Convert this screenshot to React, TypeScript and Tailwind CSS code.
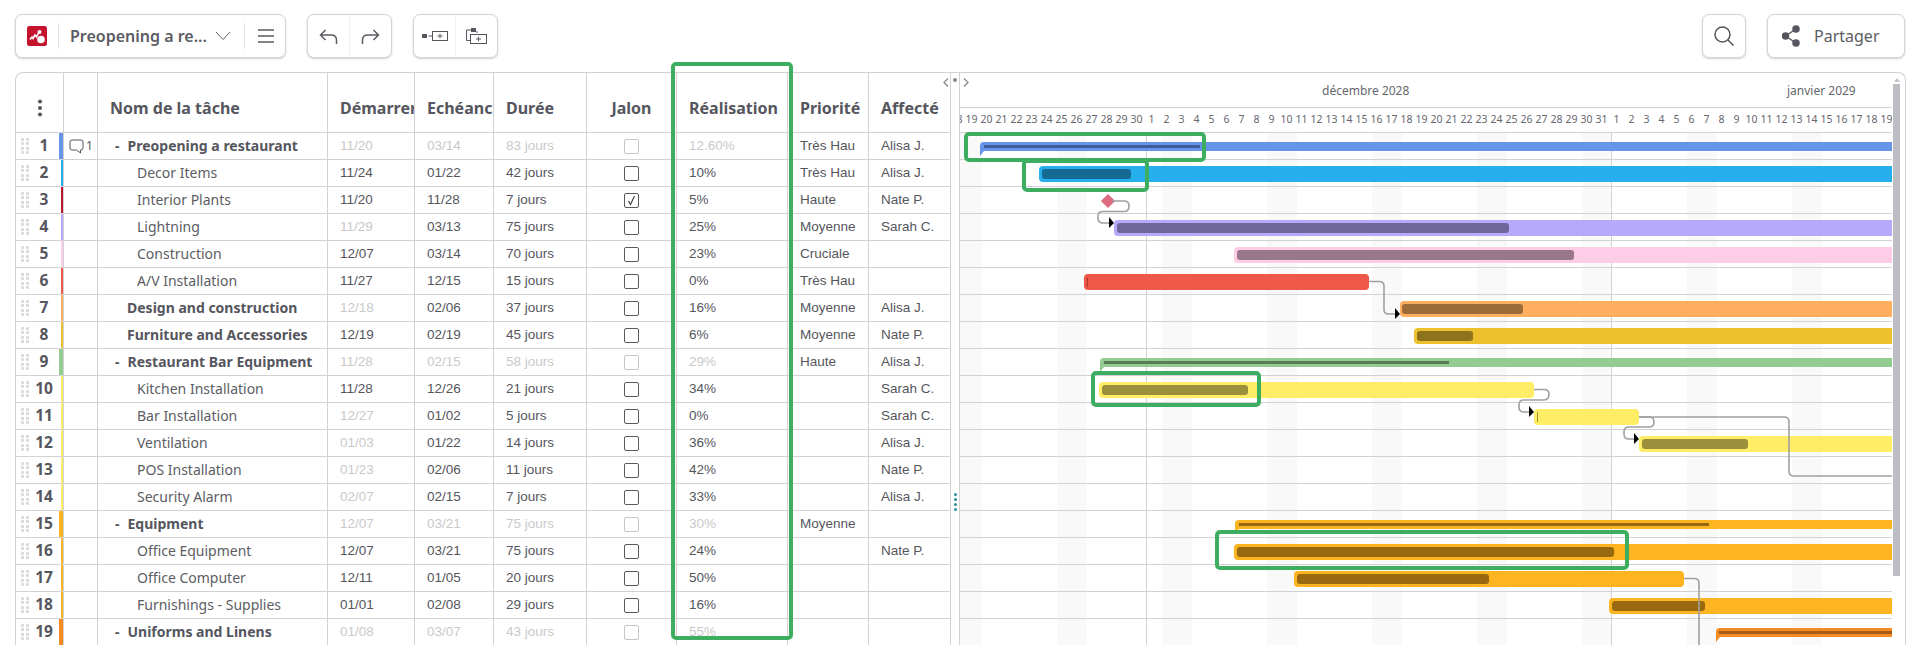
import React from "react";

const NOTO = "font-['Noto_Sans',sans-serif]";
const ARIAL = "font-['Liberation_Sans',Arial,sans-serif]";

type Row = {
  n: number; name: string; start: string; end: string; dur: string; real: string;
  prio?: string; who?: string; color: string; parent?: boolean; bold?: boolean; gs?: boolean; checked?: boolean;
};

const rows: Row[] = [
  { n: 1, name: "Preopening a restaurant", start: "11/20", end: "03/14", dur: "83 jours", real: "12.60%", prio: "Très Hau", who: "Alisa J.", color: "#6694e8", parent: true, bold: true },
  { n: 2, name: "Decor Items", start: "11/24", end: "01/22", dur: "42 jours", real: "10%", prio: "Très Hau", who: "Alisa J.", color: "#27aeec" },
  { n: 3, name: "Interior Plants", start: "11/20", end: "11/28", dur: "7 jours", real: "5%", prio: "Haute", who: "Nate P.", color: "#b8182f", checked: true },
  { n: 4, name: "Lightning", start: "11/29", end: "03/13", dur: "75 jours", real: "25%", prio: "Moyenne", who: "Sarah C.", color: "#b6a9fb", gs: true },
  { n: 5, name: "Construction", start: "12/07", end: "03/14", dur: "70 jours", real: "23%", prio: "Cruciale", color: "#fdcce6" },
  { n: 6, name: "A/V Installation", start: "11/27", end: "12/15", dur: "15 jours", real: "0%", prio: "Très Hau", color: "#ef5748" },
  { n: 7, name: "Design and construction", start: "12/18", end: "02/06", dur: "37 jours", real: "16%", prio: "Moyenne", who: "Alisa J.", color: "#ffaf5f", bold: true, gs: true },
  { n: 8, name: "Furniture and Accessories", start: "12/19", end: "02/19", dur: "45 jours", real: "6%", prio: "Moyenne", who: "Nate P.", color: "#ecc02f", bold: true },
  { n: 9, name: "Restaurant Bar Equipment", start: "11/28", end: "02/15", dur: "58 jours", real: "29%", prio: "Haute", who: "Alisa J.", color: "#93cc91", parent: true, bold: true },
  { n: 10, name: "Kitchen Installation", start: "11/28", end: "12/26", dur: "21 jours", real: "34%", who: "Sarah C.", color: "#ffed65" },
  { n: 11, name: "Bar Installation", start: "12/27", end: "01/02", dur: "5 jours", real: "0%", who: "Sarah C.", color: "#ffed65", gs: true },
  { n: 12, name: "Ventilation", start: "01/03", end: "01/22", dur: "14 jours", real: "36%", who: "Alisa J.", color: "#ffed65", gs: true },
  { n: 13, name: "POS Installation", start: "01/23", end: "02/06", dur: "11 jours", real: "42%", who: "Nate P.", color: "#ffed65", gs: true },
  { n: 14, name: "Security Alarm", start: "02/07", end: "02/15", dur: "7 jours", real: "33%", who: "Alisa J.", color: "#ffed65", gs: true },
  { n: 15, name: "Equipment", start: "12/07", end: "03/21", dur: "75 jours", real: "30%", prio: "Moyenne", color: "#fdb421", parent: true, bold: true },
  { n: 16, name: "Office Equipment", start: "12/07", end: "03/21", dur: "75 jours", real: "24%", who: "Nate P.", color: "#fdb421" },
  { n: 17, name: "Office Computer", start: "12/11", end: "01/05", dur: "20 jours", real: "50%", color: "#fdb421" },
  { n: 18, name: "Furnishings - Supplies", start: "01/01", end: "02/08", dur: "29 jours", real: "16%", color: "#fdb421" },
  { n: 19, name: "Uniforms and Linens", start: "01/08", end: "03/07", dur: "43 jours", real: "55%", color: "#f58b22", parent: true, bold: true },
];

type Bar = { row: number; x: number; w: number; color: string; dark: string; px: number; pw: number; parent?: boolean; open?: boolean };
const END = 1892;
const bars: Bar[] = [
  { row: 0, x: 980, w: END - 980, color: "#6694e8", dark: "#3e5c9a", px: 984, pw: 216, parent: true, open: true },
  { row: 1, x: 1039, w: END - 1039, color: "#27aeec", dark: "#156a94", px: 1042, pw: 89, open: true },
  { row: 3, x: 1114, w: END - 1114, color: "#b6a9fb", dark: "#6e6698", px: 1117, pw: 392, open: true },
  { row: 4, x: 1234, w: END - 1234, color: "#fdcce6", dark: "#997889", px: 1237, pw: 337, open: true },
  { row: 5, x: 1084, w: 285, color: "#ef5748", dark: "#a63c32", px: 1087, pw: 1 },
  { row: 6, x: 1400, w: END - 1400, color: "#ffaf5f", dark: "#9d6a3a", px: 1402, pw: 121, open: true },
  { row: 7, x: 1414, w: END - 1414, color: "#ecc02f", dark: "#8f731c", px: 1417, pw: 56, open: true },
  { row: 8, x: 1100, w: END - 1100, color: "#93cc91", dark: "#5a7b58", px: 1104, pw: 345, parent: true, open: true },
  { row: 9, x: 1099, w: 435, color: "#ffed65", dark: "#9b8f3c", px: 1102, pw: 146 },
  { row: 10, x: 1534, w: 105, color: "#ffed65", dark: "#9b8f3c", px: 1537, pw: 1 },
  { row: 11, x: 1639, w: END - 1639, color: "#ffed65", dark: "#9b8f3c", px: 1642, pw: 106, open: true },
  { row: 14, x: 1235, w: END - 1235, color: "#fdb421", dark: "#99690f", px: 1239, pw: 470, parent: true, open: true },
  { row: 15, x: 1234, w: END - 1234, color: "#fdb421", dark: "#99690f", px: 1237, pw: 377, open: true },
  { row: 16, x: 1294, w: 390, color: "#fdb421", dark: "#99690f", px: 1297, pw: 192 },
  { row: 17, x: 1609, w: END - 1609, color: "#fdb421", dark: "#99690f", px: 1612, pw: 93, open: true },
  { row: 18, x: 1716, w: END - 1716, color: "#f58b22", dark: "#a85b14", px: 1719, pw: 173, parent: true, open: true },
];

const days: string[] = [];
for (let d = 18; d <= 30; d++) days.push(String(d));
for (let d = 1; d <= 31; d++) days.push(String(d));
for (let d = 1; d <= 19; d++) days.push(String(d));

const stripes = [952, 1057, 1162, 1267, 1372, 1477, 1582, 1687, 1792];

function Dots() {
  return (
    <span className="grid grid-cols-2 gap-x-[2px] gap-y-[1.5px] w-[8px]">
      {Array.from({ length: 8 }).map((_, i) => (
        <span key={i} className="w-[3px] h-[3px] bg-[#dcdcdc]" />
      ))}
    </span>
  );
}

function Check({ dim, checked }: { dim: boolean; checked?: boolean }) {
  return (
    <span className={`flex items-center justify-center w-[15px] h-[15px] rounded-[2px] border ${dim ? "border-[#c6c6c6]" : "border-[#5a5a5a]"}`}>
      {checked && (
        <svg width="11" height="11" viewBox="0 0 11 11" fill="none" stroke="#444" strokeWidth="1.2">
          <path d="M2.5 6 L4.5 9.5 L8.5 1" />
        </svg>
      )}
    </span>
  );
}

function TableRow({ r }: { r: Row }) {
  const dim = "text-[#c9c9c9]";
  const norm = "text-[#55565c]";
  const s = r.parent || r.gs ? dim : norm;
  const sE = r.parent ? dim : norm;
  return (
    <div className="flex h-[27px] border-b border-[#d2d2d2]">
      <div className="w-[48px] shrink-0 flex items-center border-r border-[#d2d2d2] relative">
        <span className="ml-[5px]"><Dots /></span>
        <span className={`${NOTO} absolute left-[15px] w-[26px] text-center font-bold text-[15.5px] text-[#55565e]`}>{r.n}</span>
        <span className={`absolute right-0 top-0 bottom-0 ${r.parent ? "w-[4px]" : "w-[2px]"}`} style={{ backgroundColor: r.color }} />
      </div>
      <div className="w-[34px] shrink-0 border-r border-[#d2d2d2] flex items-center pl-[5px] text-[#55565e]">
        {r.n === 1 && (
          <>
            <svg width="15" height="15" viewBox="0 0 15 15" fill="none" stroke="#55565e" strokeWidth="1">
              <path d="M3 1 H12 Q14 1 14 3 V9 Q14 11 12 11 H11.5 V14 L7.5 11 H3 Q1 11 1 9 V3 Q1 1 3 1 Z" />
            </svg>
            <span className={`${NOTO} text-[12px] ml-[2px]`}>1</span>
          </>
        )}
      </div>
      <div className={`w-[230px] shrink-0 border-r border-[#d2d2d2] flex items-center pb-[1px] ${NOTO} text-[14px] text-[#5c5d64] whitespace-nowrap overflow-hidden`}>
        {r.parent && <span className="ml-[17px] w-[10px] font-bold text-[#55565e] leading-none">-</span>}
        {r.bold ? (
          <span className={`${r.parent ? "ml-[2.5px]" : "ml-[29px]"} font-bold text-[#55565e]`}>{r.name}</span>
        ) : (
          <span className="ml-[39px]">{r.name}</span>
        )}
      </div>
      <div className={`w-[87px] shrink-0 border-r border-[#d2d2d2] flex items-center pl-[12px] ${ARIAL} text-[13.5px] ${s}`}>{r.start}</div>
      <div className={`w-[79px] shrink-0 border-r border-[#d2d2d2] flex items-center pl-[12px] ${ARIAL} text-[13.5px] ${sE}`}>{r.end}</div>
      <div className={`w-[93px] shrink-0 border-r border-[#d2d2d2] flex items-center pl-[12px] ${ARIAL} text-[13.5px] ${sE}`}>{r.dur}</div>
      <div className="w-[90px] shrink-0 border-r border-[#d2d2d2] flex items-center justify-center">
        <Check dim={!!r.parent} checked={r.checked} />
      </div>
      <div className={`w-[111px] shrink-0 border-r border-[#d2d2d2] flex items-center pl-[12px] ${ARIAL} text-[13.5px] ${sE}`}>{r.real}</div>
      <div className={`w-[81px] shrink-0 border-r border-[#d2d2d2] flex items-center pl-[12px] ${ARIAL} text-[13.5px] text-[#55565c]`}>
        <span className="w-[56px] overflow-hidden whitespace-nowrap">{r.prio}</span>
      </div>
      <div className={`w-[81px] shrink-0 flex items-center pl-[12px] ${ARIAL} text-[13.5px] text-[#55565c] whitespace-nowrap`}>{r.who}</div>
    </div>
  );
}

function HeaderCell({ w, children, center, border = true, pl = 12 }: { w: string; children?: React.ReactNode; center?: boolean; border?: boolean; pl?: number }) {
  return (
    <div
      className={`${w} shrink-0 ${border ? "border-r border-[#d2d2d2]" : ""} pt-[11px] flex items-center overflow-hidden whitespace-nowrap ${center ? "justify-center" : ""} ${NOTO} font-bold text-[16px] text-[#55565e]`}
      style={center ? undefined : { paddingLeft: pl }}
    >
      {children}
    </div>
  );
}

function GanttBar({ b }: { b: Bar }) {
  const top = b.parent ? 9 : 6;
  const h = b.parent ? 9 : 16;
  return (
    <>
      <div
        className={`absolute ${b.open ? "rounded-l-[4px]" : "rounded-[4px]"} ${b.parent ? "rounded-l-none rounded-tl-[4px]" : ""}`}
        style={{ left: b.x - 960, width: b.w, top: b.row * 27 + top, height: h, backgroundColor: b.color }}
      />
      {b.parent && (
        <svg className="absolute" width="5" height="5" style={{ left: b.x - 960, top: b.row * 27 + top + h }}>
          <path d="M0 0 H4 L0 5 Z" fill={b.color} />
        </svg>
      )}
      <div
        className={`absolute ${b.parent ? "" : "rounded-[3px]"}`}
        style={{
          left: b.px - 960,
          width: b.pw,
          top: b.row * 27 + top + 3,
          height: b.parent ? 3 : 10,
          backgroundColor: b.dark,
        }}
      />
    </>
  );
}

function GreenBox({ x, y, w, h }: { x: number; y: number; w: number; h: number }) {
  return (
    <div
      className="absolute border-[4px] border-[#3dae5f] rounded-[5px] pointer-events-none z-20"
      style={{ left: x, top: y, width: w, height: h }}
    />
  );
}

function Group({ children }: { children: React.ReactNode }) {
  return (
    <div className="flex items-center h-[44px] rounded-[7px] border border-[#d4d4d4] bg-white shadow-[0_1px_2px_rgba(0,0,0,0.18)]">
      {children}
    </div>
  );
}

function Connectors() {
  const g = "#a0a0a0";
  const o = (x: number) => x - 960;
  const y = (v: number) => v - 132;
  const arrow = (x: number, v: number) => (
    <path d={`M${o(x) - 5} ${y(v) - 6} L${o(x)} ${y(v)} L${o(x) - 5} ${y(v) + 5} Z`} fill="#000" stroke="none" />
  );
  const paths = [
    `M${o(1112)} ${y(200)} H${o(1124)} Q${o(1129)} ${y(200)} ${o(1129)} ${y(205)} Q${o(1129)} ${y(210.5)} ${o(1124)} ${y(210.5)} H${o(1103)} Q${o(1098)} ${y(210.5)} ${o(1098)} ${y(215)} V${y(217)} Q${o(1098)} ${y(222)} ${o(1103)} ${y(222)} H${o(1112)}`,
    `M${o(1369)} ${y(280.5)} H${o(1379)} Q${o(1384)} ${y(280.5)} ${o(1384)} ${y(285)} V${y(309)} Q${o(1384)} ${y(313)} ${o(1389)} ${y(313)} H${o(1397)}`,
    `M${o(1534)} ${y(388.5)} H${o(1544)} Q${o(1549)} ${y(388.5)} ${o(1549)} ${y(393)} Q${o(1549)} ${y(399)} ${o(1544)} ${y(399)} H${o(1524)} Q${o(1519)} ${y(399)} ${o(1519)} ${y(404)} V${y(406)} Q${o(1519)} ${y(411)} ${o(1524)} ${y(411)} H${o(1531)}`,
    `M${o(1639)} ${y(416)} H${o(1649)} Q${o(1654)} ${y(416)} ${o(1654)} ${y(421)} Q${o(1654)} ${y(426)} ${o(1649)} ${y(426)} H${o(1629)} Q${o(1624)} ${y(426)} ${o(1624)} ${y(431)} V${y(433)} Q${o(1624)} ${y(438)} ${o(1629)} ${y(438)} H${o(1636)}`,
    `M${o(1639)} ${y(416)} H${o(1784)} Q${o(1789)} ${y(416)} ${o(1789)} ${y(421)} V${y(470)} Q${o(1789)} ${y(475)} ${o(1794)} ${y(475)} H${o(1892)}`,
    `M${o(1684)} ${y(577.5)} H${o(1694)} Q${o(1699)} ${y(577.5)} ${o(1699)} ${y(582)} V${y(645)}`,
  ];
  return (
    <svg className="absolute left-0 top-0 z-10" width="932" height="513" fill="none">
      {paths.map((d, i) => (
        <path key={i} d={d} stroke={g} strokeWidth="1.6" />
      ))}
      {arrow(1114, 222)}
      {arrow(1400, 313)}
      {arrow(1534, 411)}
      {arrow(1639, 438)}
    </svg>
  );
}

export default function App() {
  return (
    <div className={`relative w-[1920px] h-[645px] overflow-hidden bg-white ${NOTO}`}>
      {/* toolbar */}
      <div className="flex items-start pt-[14px] pl-[15px] pr-[15px] h-[72px]">
        <Group>
          <div className="w-[42px] h-full flex items-center justify-center">
            <svg width="20" height="20" viewBox="0 0 20 20">
              <rect width="20" height="20" rx="2.5" fill="#c4122f" />
              <path d="M3 13.5 L5 11 L6 12.5 L8 9 L9.5 11 L12 6" stroke="#fff" strokeWidth="1.6" fill="none" />
              <circle cx="14" cy="13.5" r="3.8" fill="#fff" />
              <circle cx="12.5" cy="6" r="2" fill="#fff" />
            </svg>
          </div>
          <div className="w-px h-[26px] bg-[#e3e3e3]" />
          <span className="ml-[11px] w-[143px] font-semibold text-[16px] text-[#5b5c64] whitespace-nowrap">Preopening a re...</span>
          <svg className="ml-[2px]" width="16" height="10" viewBox="0 0 16 10" fill="none" stroke="#66676e" strokeWidth="1">
            <path d="M1 1 L8 8.5 L15 1" />
          </svg>
          <div className="ml-[13px] w-px h-[26px] bg-[#e3e3e3]" />
          <svg className="ml-[13px] mr-[11px]" width="16" height="14" viewBox="0 0 16 14" fill="none" stroke="#5b5c64" strokeWidth="1.4">
            <path d="M0 1 H16 M0 7 H16 M0 13 H16" />
          </svg>
        </Group>
        <div className="ml-[21px]">
          <Group>
            <div className="w-[41px] h-full flex items-center justify-center">
              <svg width="19" height="15" viewBox="0 0 19 15" fill="none" stroke="#5b5c64" strokeWidth="1.5">
                <path d="M6.5 1 L1.5 6 L6.5 11 M1.5 6 H12 Q17.5 6 17.5 11 V15" />
              </svg>
            </div>
            <div className="w-px h-full bg-[#efefef]" />
            <div className="w-[41px] h-full flex items-center justify-center">
              <svg width="19" height="15" viewBox="0 0 19 15" fill="none" stroke="#5b5c64" strokeWidth="1.5">
                <path d="M12.5 1 L17.5 6 L12.5 11 M17.5 6 H7 Q1.5 6 1.5 11 V15" />
              </svg>
            </div>
          </Group>
        </div>
        <div className="ml-[21px]">
          <Group>
            <div className="w-[41px] h-full flex items-center justify-center">
              <svg width="26" height="10" viewBox="0 0 26 10" fill="none" stroke="#55565e" strokeWidth="1">
                <rect x="0" y="3" width="5" height="4" fill="#55565e" stroke="none" />
                <path d="M6.5 5 H11" />
                <rect x="10.5" y="0.5" width="15" height="9" />
                <path d="M15.5 5 H20.5 M18 2.8 V7.2" />
              </svg>
            </div>
            <div className="w-px h-full bg-[#efefef]" />
            <div className="w-[41px] h-full flex items-center justify-center">
              <svg width="21" height="16" viewBox="0 0 21 16" fill="none" stroke="#55565e" strokeWidth="1">
                <rect x="5" y="0" width="5" height="4" fill="#55565e" stroke="none" />
                <path d="M0.5 2 V12.5 H4.5 M0.5 2 H5 M10 4 H12" />
                <rect x="4.5" y="6.5" width="16" height="9" />
                <path d="M10 11 H15 M12.5 8.8 V13.2" />
              </svg>
            </div>
          </Group>
        </div>
        <div className="ml-auto">
          <Group>
            <div className="w-[42px] h-full flex items-center justify-center">
              <svg width="22" height="22" viewBox="0 0 22 22" fill="none" stroke="#55565e" strokeWidth="1.5">
                <circle cx="9.5" cy="9.5" r="7.5" />
                <path d="M15 15 L20.5 20.5" />
              </svg>
            </div>
          </Group>
        </div>
        <div className="ml-[21px]">
          <Group>
            <div className="w-[136px] h-full flex items-center pl-[14px]">
              <svg width="18" height="22" viewBox="0 0 18 22" fill="#55565e" stroke="#55565e" strokeWidth="1.5">
                <circle cx="3.5" cy="11" r="3" />
                <circle cx="14" cy="4" r="3" />
                <circle cx="14" cy="18" r="3" />
                <path d="M3.5 11 L14 4 M3.5 11 L14 18" fill="none" />
              </svg>
              <span className="ml-[14px] text-[16px] text-[#5b5c64]">Partager</span>
            </div>
          </Group>
        </div>
      </div>

      {/* main panel */}
      <div className="ml-[15px] w-[1891px] h-[573px] border border-b-0 border-[#d2d2d2] rounded-t-[8px] flex overflow-hidden">
        {/* table */}
        <div className="w-[935px] shrink-0 border-r border-[#d2d2d2]">
          <div className="flex h-[60px] border-b border-[#d2d2d2]">
            <HeaderCell w="w-[48px]" center>
              <svg width="6" height="18" viewBox="0 0 6 18" fill="#55565e">
                <circle cx="3" cy="2.5" r="2" />
                <circle cx="3" cy="9" r="2" />
                <circle cx="3" cy="15.5" r="2" />
              </svg>
            </HeaderCell>
            <HeaderCell w="w-[34px]" />
            <HeaderCell w="w-[230px]">Nom de la tâche</HeaderCell>
            <HeaderCell w="w-[87px]">Démarrer</HeaderCell>
            <HeaderCell w="w-[79px]">Echéance</HeaderCell>
            <HeaderCell w="w-[93px]">Durée</HeaderCell>
            <HeaderCell w="w-[90px]" center>Jalon</HeaderCell>
            <HeaderCell w="w-[111px]" pl={12}>Réalisation</HeaderCell>
            <HeaderCell w="w-[81px]">Priorité</HeaderCell>
            <HeaderCell w="w-[81px]" border={false}>Affecté</HeaderCell>
          </div>
          {rows.map((r) => (
            <TableRow key={r.n} r={r} />
          ))}
        </div>

        {/* splitter */}
        <div className="w-[9px] shrink-0 border-r border-[#d2d2d2]" />

        {/* gantt */}
        <div className="w-[932px] shrink-0">
          <div className="relative h-[35px] border-b border-[#d2d2d2] text-[12px] text-[#66676e]">
            <span className="absolute left-[362px] top-[9px]">décembre 2028</span>
            <span className="absolute left-[827px] top-[9px]">janvier 2029</span>
          </div>
          <div className="h-[25px] border-b border-[#d2d2d2] flex items-center overflow-hidden">
            <div className="flex shrink-0 -ml-[11px]">
              {days.map((d, i) => (
                <span key={i} className="w-[15px] shrink-0 text-center text-[10.5px] text-[#66676e]">{d}</span>
              ))}
            </div>
          </div>
          <div className="relative h-[513px]">
            {stripes.map((s) => (
              <div key={s} className="absolute top-0 bottom-0 bg-[#f9f9f9]" style={{ left: Math.max(s - 960, 0), width: s < 960 ? 22 : 30 }} />
            ))}
            <div className="absolute top-0 bottom-0 left-[186px] w-px bg-[#d2d2d2]" />
            <div className="absolute top-0 bottom-0 left-[651px] w-px bg-[#d2d2d2]" />
            {rows.map((r, i) => (
              <div key={r.n} className="absolute left-0 right-0 h-px bg-[#d2d2d2]" style={{ top: (i + 1) * 27 - 1 }} />
            ))}
            {bars.map((b) => (
              <GanttBar key={b.row} b={b} />
            ))}
            <div className="absolute left-[143px] top-[63px] w-[10px] h-[10px] rotate-45 bg-[#dd6b80] z-10" />
            <Connectors />
          </div>
        </div>

        {/* scrollbar */}
        <div className="w-[13px] shrink-0 relative">
          <svg className="absolute left-[2px] top-[5px]" width="6" height="4" viewBox="0 0 6 4">
            <path d="M3 0 L6 4 H0 Z" fill="#c4c5c9" />
          </svg>
          <div className="absolute left-[1px] top-[11px] w-[7px] h-[492px] bg-[#bdbec3]" />
        </div>
      </div>

      {/* splitter handles */}
      <svg className="absolute left-[943px] top-[78px]" width="6" height="9" viewBox="0 0 6 9" fill="none" stroke="#8a8a8a" strokeWidth="1.3">
        <path d="M5 0.5 L1 4.5 L5 8.5" />
      </svg>
      <span className="absolute left-[953px] top-[78px] w-[4px] h-[4px] rounded-full bg-[#8a8a8a]" />
      <svg className="absolute left-[963px] top-[78px]" width="6" height="9" viewBox="0 0 6 9" fill="none" stroke="#8a8a8a" strokeWidth="1.3">
        <path d="M1 0.5 L5 4.5 L1 8.5" />
      </svg>
      <div className="absolute left-[954px] top-[493px] flex flex-col gap-[2px]">
        {[0, 1, 2, 3].map((i) => (
          <span key={i} className="w-[3px] h-[3px] rounded-full bg-[#2b8c9e]" />
        ))}
      </div>

      {/* highlight boxes */}
      <GreenBox x={671} y={62} w={122} h={578} />
      <GreenBox x={964} y={132} w={242} h={30} />
      <GreenBox x={1022} y={159} w={127} h={33} />
      <GreenBox x={1091} y={371} w={170} h={36} />
      <GreenBox x={1215} y={530} w={414} h={40} />
    </div>
  );
}
